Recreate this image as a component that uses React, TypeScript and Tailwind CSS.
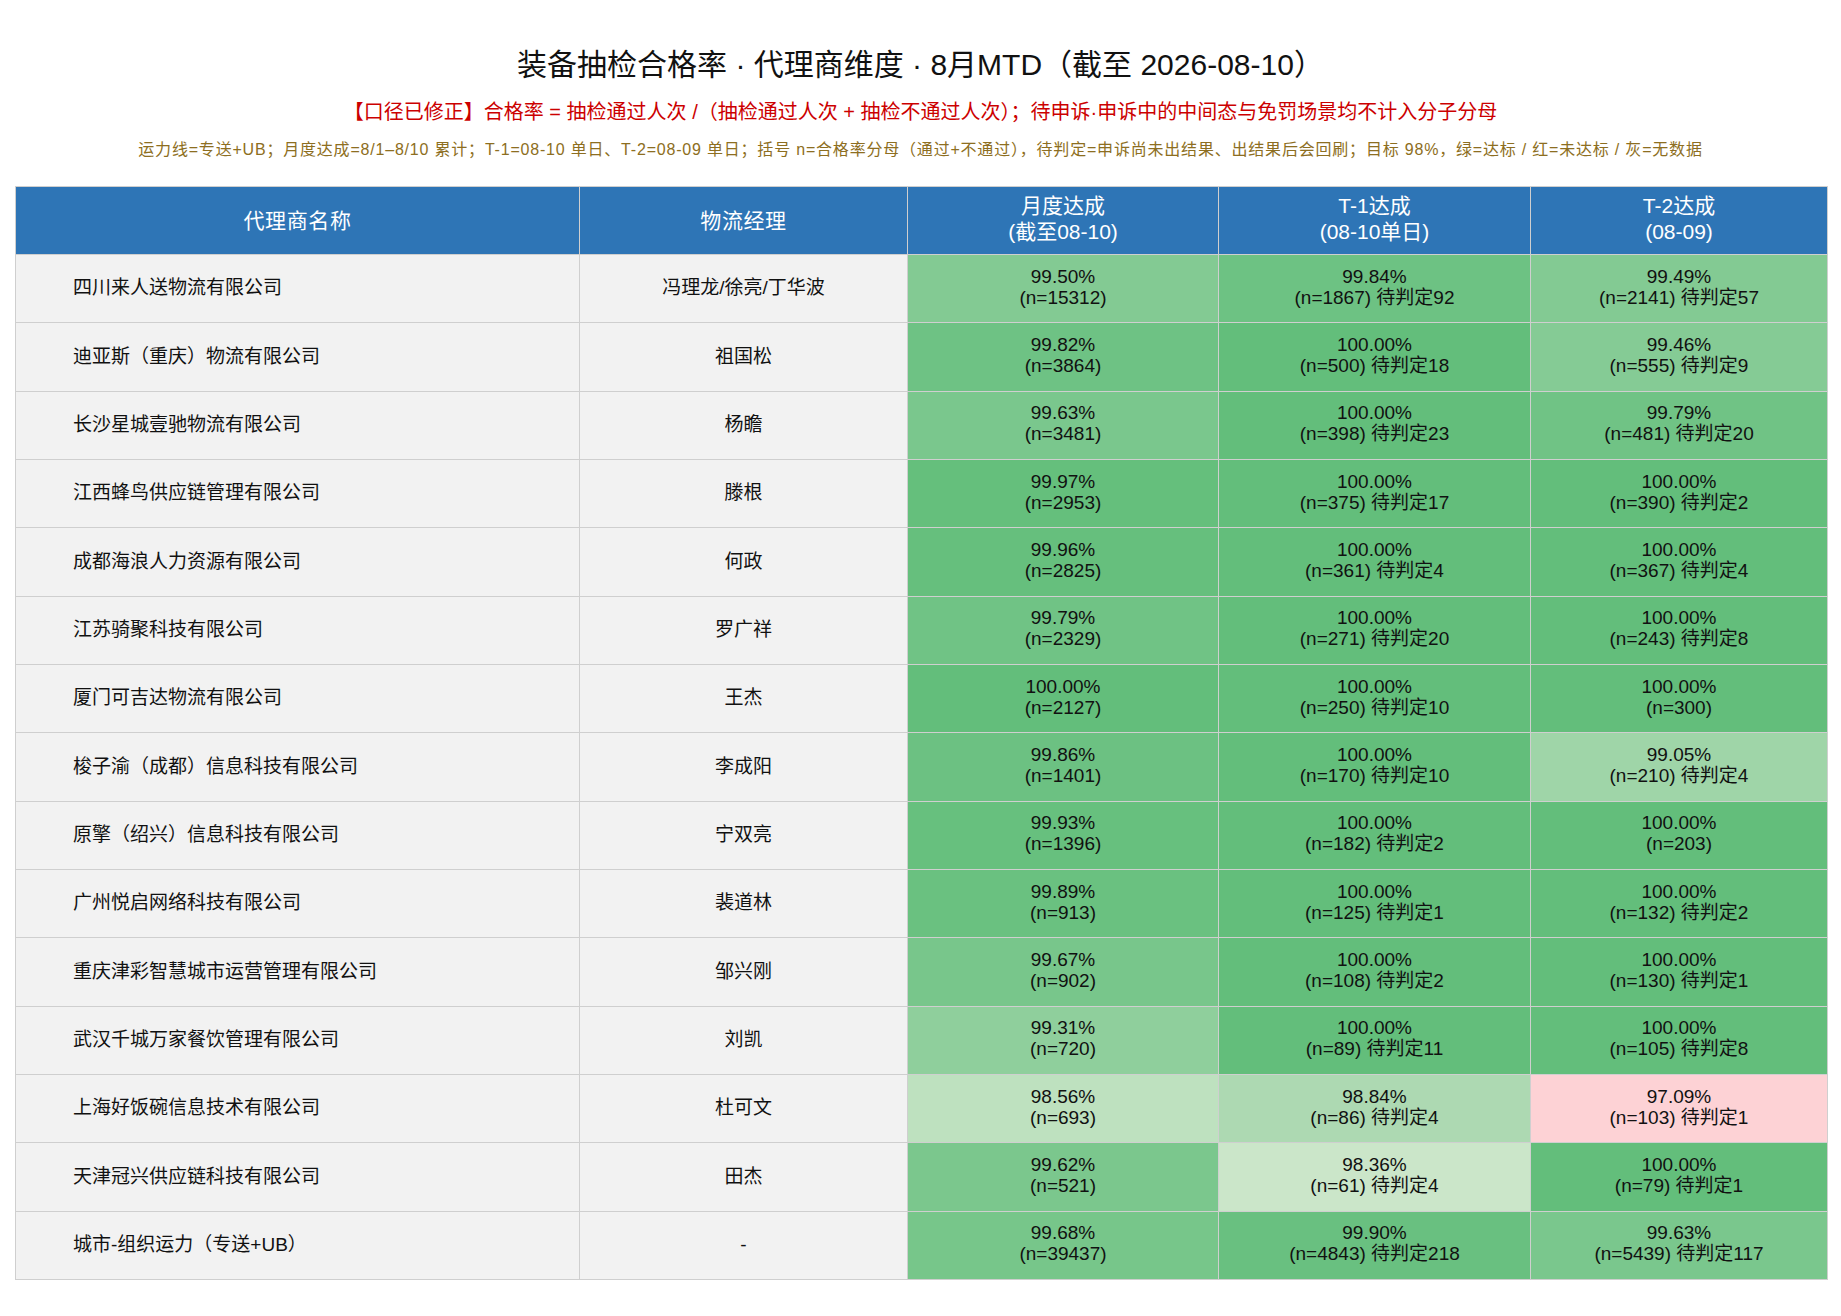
type Stat = {
  rate: string;
  n: string;
  pending?: string;
  bg: string;
};

type Row = {
  name: string;
  manager: string;
  month: Stat;
  t1: Stat;
  t2: Stat;
};

const rows: Row[] = [
  {
    name: "四川来人送物流有限公司",
    manager: "冯理龙/徐亮/丁华波",
    month: { rate: "99.50%", n: "15312", bg: "bg-[#83ca93]" },
    t1: { rate: "99.84%", n: "1867", pending: "92", bg: "bg-[#6dc283]" },
    t2: { rate: "99.49%", n: "2141", pending: "57", bg: "bg-[#83ca93]" },
  },
  {
    name: "迪亚斯（重庆）物流有限公司",
    manager: "祖国松",
    month: { rate: "99.82%", n: "3864", bg: "bg-[#6ec284]" },
    t1: { rate: "100.00%", n: "500", pending: "18", bg: "bg-[#63be7b]" },
    t2: { rate: "99.46%", n: "555", pending: "9", bg: "bg-[#85cb95]" },
  },
  {
    name: "长沙星城壹驰物流有限公司",
    manager: "杨瞻",
    month: { rate: "99.63%", n: "3481", bg: "bg-[#7ac78d]" },
    t1: { rate: "100.00%", n: "398", pending: "23", bg: "bg-[#63be7b]" },
    t2: { rate: "99.79%", n: "481", pending: "20", bg: "bg-[#70c385]" },
  },
  {
    name: "江西蜂鸟供应链管理有限公司",
    manager: "滕根",
    month: { rate: "99.97%", n: "2953", bg: "bg-[#65bf7c]" },
    t1: { rate: "100.00%", n: "375", pending: "17", bg: "bg-[#63be7b]" },
    t2: { rate: "100.00%", n: "390", pending: "2", bg: "bg-[#63be7b]" },
  },
  {
    name: "成都海浪人力资源有限公司",
    manager: "何政",
    month: { rate: "99.96%", n: "2825", bg: "bg-[#66bf7d]" },
    t1: { rate: "100.00%", n: "361", pending: "4", bg: "bg-[#63be7b]" },
    t2: { rate: "100.00%", n: "367", pending: "4", bg: "bg-[#63be7b]" },
  },
  {
    name: "江苏骑聚科技有限公司",
    manager: "罗广祥",
    month: { rate: "99.79%", n: "2329", bg: "bg-[#70c385]" },
    t1: { rate: "100.00%", n: "271", pending: "20", bg: "bg-[#63be7b]" },
    t2: { rate: "100.00%", n: "243", pending: "8", bg: "bg-[#63be7b]" },
  },
  {
    name: "厦门可吉达物流有限公司",
    manager: "王杰",
    month: { rate: "100.00%", n: "2127", bg: "bg-[#63be7b]" },
    t1: { rate: "100.00%", n: "250", pending: "10", bg: "bg-[#63be7b]" },
    t2: { rate: "100.00%", n: "300", bg: "bg-[#63be7b]" },
  },
  {
    name: "梭子渝（成都）信息科技有限公司",
    manager: "李成阳",
    month: { rate: "99.86%", n: "1401", bg: "bg-[#6cc182]" },
    t1: { rate: "100.00%", n: "170", pending: "10", bg: "bg-[#63be7b]" },
    t2: { rate: "99.05%", n: "210", pending: "4", bg: "bg-[#9fd5a8]" },
  },
  {
    name: "原擎（绍兴）信息科技有限公司",
    manager: "宁双亮",
    month: { rate: "99.93%", n: "1396", bg: "bg-[#67c07e]" },
    t1: { rate: "100.00%", n: "182", pending: "2", bg: "bg-[#63be7b]" },
    t2: { rate: "100.00%", n: "203", bg: "bg-[#63be7b]" },
  },
  {
    name: "广州悦启网络科技有限公司",
    manager: "裴道林",
    month: { rate: "99.89%", n: "913", bg: "bg-[#6ac180]" },
    t1: { rate: "100.00%", n: "125", pending: "1", bg: "bg-[#63be7b]" },
    t2: { rate: "100.00%", n: "132", pending: "2", bg: "bg-[#63be7b]" },
  },
  {
    name: "重庆津彩智慧城市运营管理有限公司",
    manager: "邹兴刚",
    month: { rate: "99.67%", n: "902", bg: "bg-[#78c68b]" },
    t1: { rate: "100.00%", n: "108", pending: "2", bg: "bg-[#63be7b]" },
    t2: { rate: "100.00%", n: "130", pending: "1", bg: "bg-[#63be7b]" },
  },
  {
    name: "武汉千城万家餐饮管理有限公司",
    manager: "刘凯",
    month: { rate: "99.31%", n: "720", bg: "bg-[#8fcf9c]" },
    t1: { rate: "100.00%", n: "89", pending: "11", bg: "bg-[#63be7b]" },
    t2: { rate: "100.00%", n: "105", pending: "8", bg: "bg-[#63be7b]" },
  },
  {
    name: "上海好饭碗信息技术有限公司",
    manager: "杜可文",
    month: { rate: "98.56%", n: "693", bg: "bg-[#bee1bf]" },
    t1: { rate: "98.84%", n: "86", pending: "4", bg: "bg-[#add9b2]" },
    t2: { rate: "97.09%", n: "103", pending: "1", bg: "bg-[#fdd2d5]" },
  },
  {
    name: "天津冠兴供应链科技有限公司",
    manager: "田杰",
    month: { rate: "99.62%", n: "521", bg: "bg-[#7bc78d]" },
    t1: { rate: "98.36%", n: "61", pending: "4", bg: "bg-[#cbe6c9]" },
    t2: { rate: "100.00%", n: "79", pending: "1", bg: "bg-[#63be7b]" },
  },
  {
    name: "城市-组织运力（专送+UB）",
    manager: "-",
    month: { rate: "99.68%", n: "39437", bg: "bg-[#77c68a]" },
    t1: { rate: "99.90%", n: "4843", pending: "218", bg: "bg-[#69c080]" },
    t2: { rate: "99.63%", n: "5439", pending: "117", bg: "bg-[#7ac78d]" },
  },
];

const headCell =
  "flex flex-col items-center justify-center border-r border-b border-[#cfcfcf] bg-[#2e75b6] text-[21px] leading-[26px] text-white";
const rowCell =
  "h-[68.33px] flex items-center border-r border-b border-[#cfcfcf] text-[19px] text-[#111]";

function StatCell({ stat }: { stat: Stat }) {
  return (
    <div className={`${rowCell} flex-col justify-center pb-[4px] leading-[21px] ${stat.bg}`}>
      <span>{stat.rate}</span>
      <span>
        (n={stat.n}){stat.pending ? ` 待判定${stat.pending}` : ""}
      </span>
    </div>
  );
}

export default function App() {
  return (
    <div className="min-h-screen bg-white px-[15px] pt-[47px] font-['Liberation_Sans','Noto_Sans_CJK_SC',sans-serif]">
      <h1 className="text-center text-[30px] leading-[36px] text-[#111]">
        装备抽检合格率 · 代理商维度 · 8月MTD（截至 2026-08-10）
      </h1>
      <p className="mt-[15px] text-center text-[20px] leading-[28px] text-[#cc0000]">
        【口径已修正】合格率 = 抽检通过人次 /（抽检通过人次 + 抽检不通过人次）；待申诉·申诉中的中间态与免罚场景均不计入分子分母
      </p>
      <p className="mt-[13px] text-center text-[16px] leading-[22px] tracking-[0.8px] text-[#8d6e21]">
        运力线=专送+UB；月度达成=8/1–8/10 累计；T-1=08-10 单日、T-2=08-09 单日；括号 n=合格率分母（通过+不通过），待判定=申诉尚未出结果、出结果后会回刷；目标 98%，绿=达标 / 红=未达标 / 灰=无数据
      </p>

      <div className="mt-[25px] grid w-[1813px] grid-cols-[564px_328px_311px_312px_297px] border-l border-t border-[#cfcfcf]">
        <div className={`${headCell} h-[68px] tracking-[0.6px]`}>代理商名称</div>
        <div className={`${headCell} h-[68px] tracking-[0.6px]`}>物流经理</div>
        <div className={`${headCell} pb-[4px]`}>
          <span>月度达成</span>
          <span>(截至08-10)</span>
        </div>
        <div className={`${headCell} pb-[4px]`}>
          <span>T-1达成</span>
          <span>(08-10单日)</span>
        </div>
        <div className={`${headCell} pb-[4px]`}>
          <span>T-2达成</span>
          <span>(08-09)</span>
        </div>

        {rows.map((row) => (
          <div key={row.name} className="contents">
            <div className={`${rowCell} bg-[#f2f2f2] pl-[57px]`}>{row.name}</div>
            <div className={`${rowCell} justify-center bg-[#f2f2f2]`}>{row.manager}</div>
            <StatCell stat={row.month} />
            <StatCell stat={row.t1} />
            <StatCell stat={row.t2} />
          </div>
        ))}
      </div>
    </div>
  );
}
